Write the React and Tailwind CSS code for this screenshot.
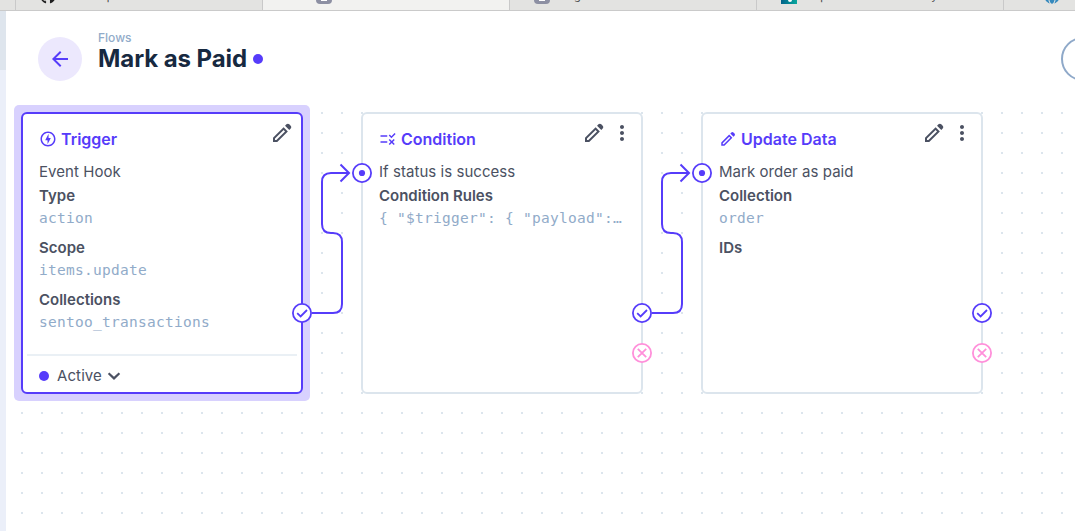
import React from "react";
import { MdOutlineOfflineBolt, MdRule, MdMoreVert, MdArrowBack } from "react-icons/md";
import { FaGithub, FaGlobe } from "react-icons/fa";

function EditIcon({ className }) {
  return (
    <svg viewBox="0 0 24 24" fill="currentColor" className={className}>
      <path d="M19.3 8.925 15.05 4.725 16.45 3.325Q17.025 2.75 17.863 2.75Q18.7 2.75 19.275 3.325L20.675 4.725Q21.25 5.3 21.275 6.113Q21.3 6.925 20.725 7.5ZM17.85 10.4 7.25 21H3V16.75L13.6 6.15ZM14.325 9.675 13.625 8.975 5 17.6V19H6.4L15.025 10.375Z" />
    </svg>
  );
}

function Port({ kind, className }) {
  return (
    <svg viewBox="0 0 20 20" fill="none" stroke="currentColor" strokeWidth="1.8" className={`absolute size-5 ${className}`}>
      <circle cx="10" cy="10" r="9.1" fill="white" />
      {kind === "in" && <circle cx="10" cy="10" r="3.1" fill="currentColor" stroke="none" />}
      {kind === "resolve" && <path d="M5.2 10.2 8.6 13.4 15 7" />}
      {kind === "reject" && <path d="M5.8 5.8 14.2 14.2M14.2 5.8 5.8 14.2" />}
    </svg>
  );
}

function Tab({ icon, active, inset = "pl-6", children }) {
  return (
    <div className={`relative h-[10px] w-[247px] shrink-0 overflow-hidden border-l border-[#c9c9c9] ${active ? "bg-[#f2f2f0]" : "bg-[#e3e3e1]"}`}>
      <div className={`-mt-3 flex h-4 items-center gap-1.5 ${inset}`}>
        {icon}
        <span className="text-[11px] leading-4 whitespace-nowrap text-[#444444]">{children}</span>
      </div>
    </div>
  );
}

const RabbitIcon = () => (
  <span className="flex size-4 shrink-0 items-end justify-center rounded-[4px] bg-[#8d90a3] pb-[3px]">
    <span className="h-1 w-1.5 bg-white" />
  </span>
);

function Field({ label, value }) {
  return (
    <div className="mb-2">
      <div className="leading-[22px] font-semibold">{label}</div>
      {value && (
        <div className="h-[22px] truncate font-['DejaVu_Sans_Mono',monospace] text-[14.5px] leading-[22px] font-normal tracking-[0.27px] text-[#91abc9]">
          {value}
        </div>
      )}
    </div>
  );
}

function Panel({ icon, title, name, fields, trigger }) {
  return (
    <section
      className={`relative flex size-[282px] shrink-0 flex-col rounded-md border-2 bg-white text-[15px] text-[#4b5162] ${
        trigger ? "border-[#563cfa]" : "border-[#dce5ed]"
      }`}
    >
      <div className="absolute top-[7px] right-[7px] flex gap-1">
        <EditIcon className="size-6" />
        {!trigger && <MdMoreVert className="size-6" />}
      </div>
      <div className="px-4 pt-[14px]">
        <h2 className="mb-[11px] flex h-[22px] items-center gap-1 text-[16px] font-semibold text-[#563cfa]">
          {icon}
          {title}
        </h2>
        <p className="mb-0.5 leading-[22px] tracking-[0.05px]">{name}</p>
        {fields.map((f) => (
          <Field key={f[0]} label={f[0]} value={f[1]} />
        ))}
      </div>
      {trigger && (
        <div className="mx-1 mt-auto flex h-[38px] items-center border-t-2 border-[#eaf0f5] pt-1 pl-3 tracking-[0.1px]">
          <span className="mr-2 size-[10px] rounded-full bg-[#563cfa]" />
          Active
          <svg viewBox="0 0 24 24" fill="none" stroke="currentColor" strokeWidth="2.2" className="size-6">
            <path d="M6.6 9.2 12 14.4 17.4 9.2" />
          </svg>
        </div>
      )}
      {!trigger && <Port kind="in" className="top-[49px] -left-[11px] text-[#563cfa]" />}
      <Port kind="resolve" className="top-[189px] -right-[11px] z-10 text-[#563cfa]" />
      {!trigger && <Port kind="reject" className="top-[229px] -right-[11px] text-[#ff8fda]" />}
    </section>
  );
}

function Connector({ className }) {
  return (
    <svg viewBox="0 0 50 160" fill="none" stroke="#563cfa" strokeWidth="2" className={`absolute top-[51px] h-40 w-[50px] ${className}`}>
      <path d="M10 150H31Q40 150 40 141V79Q40 70 31 70H29Q20 70 20 61V19Q20 10 29 10H47" />
      <path d="M38.5 1.5 47 10 38.5 18.5" />
    </svg>
  );
}

export default function App() {
  return (
    <div className="flex h-[531px] w-[1075px] flex-col overflow-hidden bg-white font-['Inter',sans-serif]">
      <nav className="flex h-[11px] shrink-0 overflow-hidden border-b border-[#cacaca] bg-[#e3e3e1]">
        <div className="w-[15px] shrink-0" />
        <Tab icon={<FaGithub className="size-4 shrink-0 text-[#202020]" />}>Build a open tests record entries list</Tab>
        <Tab active inset="pl-[53px]" icon={<RabbitIcon />}>Mark as Paid · Flows</Tab>
        <Tab icon={<RabbitIcon />}>Insights · Data Models</Tab>
        <Tab
          icon={
            <span className="flex size-4 shrink-0 items-end justify-center bg-linear-to-r from-[#05648a] to-[#0aa79c] pb-0.5">
              <span className="ml-0.5 size-1 rounded-b-full bg-white" />
            </span>
          }
        >
          Help center records utility notes
        </Tab>
        <Tab inset="pl-10" icon={<FaGlobe className="size-4 shrink-0 text-[#3589bd]" />}>Website</Tab>
      </nav>
      <div className="flex min-h-0 grow">
        <aside className="w-1.5 shrink-0 bg-[#ebeff9]">
          <div className="h-[59px] bg-[#dee5ed]" />
        </aside>
        <main className="min-w-0 grow overflow-hidden">
          <header className="flex h-[101px] items-start pt-[26px] pl-8">
            <button className="flex size-11 shrink-0 items-center justify-center rounded-full bg-[#ece8fd] text-[#563cfa]">
              <MdArrowBack className="size-6" />
            </button>
            <div className="-mt-[7px] ml-4 w-[963px] shrink-0">
              <div className="h-4 text-[12px] leading-4 font-medium text-[#91abc9]">Flows</div>
              <div className="flex h-[26px] items-center gap-1.5">
                <h1 className="text-[24px] leading-[26px] font-bold tracking-[-0.07px] text-[#172940]">Mark as Paid</h1>
                <span className="size-[10px] rounded-full bg-[#563cfa]" />
              </div>
            </div>
            <button className="size-11 shrink-0 rounded-full border-2 border-[#8fa9c9]" />
          </header>
          <div className="relative ml-[15px] flex h-[419px] items-start gap-[58px] bg-[linear-gradient(to_right,transparent_2px,white_2px),linear-gradient(#dce5ed_2px,transparent_2px)] bg-[size:20px_20px]">
            <div className="-m-[7px] shrink-0 rounded-[5px] bg-[#d8d1fe] p-[7px]">
              <Panel
                trigger
                icon={<MdOutlineOfflineBolt className="size-[18px]" />}
                title="Trigger"
                name="Event Hook"
                fields={[["Type", "action"], ["Scope", "items.update"], ["Collections", "sentoo_transactions"]]}
              />
            </div>
            <Panel
              icon={<MdRule className="size-[18px]" />}
              title="Condition"
              name="If status is success"
              fields={[["Condition Rules", '{ "$trigger": { "payload": { "status": "success" } } }']]}
            />
            <Panel
              icon={<EditIcon className="size-[18px]" />}
              title="Update Data"
              name="Mark order as paid"
              fields={[["Collection", "order"], ["IDs", ""]]}
            />
            <Connector className="left-[281px]" />
            <Connector className="left-[621px]" />
          </div>
        </main>
      </div>
    </div>
  );
}
